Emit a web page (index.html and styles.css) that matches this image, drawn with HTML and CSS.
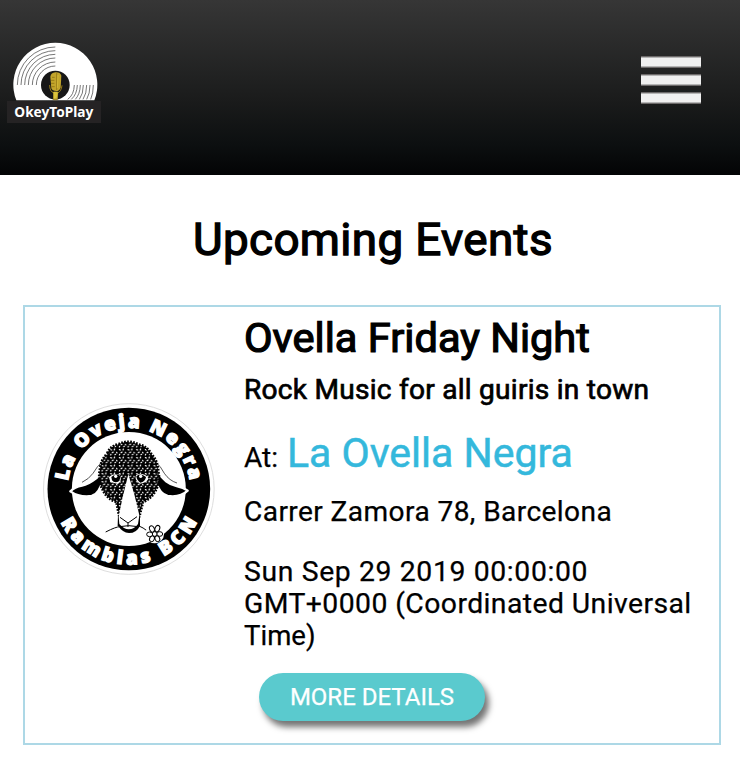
FILE: index.html
```html
<!DOCTYPE html>
<html lang="en">
<head>
<meta charset="utf-8">
<title>OkeyToPlay</title>
<link rel="stylesheet" href="styles.css">
</head>
<body>
<header class="header">
  <svg class="brand" viewBox="0 0 330 285" role="img" aria-label="OkeyToPlay">
    <path d="M49 196A126 126 0 1 1 283 196Z" fill="#fff"/>
    <g fill="none" stroke="#444" stroke-width="2.200">
      <path d="M52 150A114 114 0 0 1 166 36M63 150A103 103 0 0 1 166 47M74 150A92 92 0 0 1 166 58M85 150A81 81 0 0 1 166 69M97 150A69 69 0 0 1 166 81M109 150A57 57 0 0 1 166 93"/>
      <path d="M280 150Q280 176 272 193M270 150Q270 176 260 193M260 150Q260 176 249 193M250 150Q250 177 238 193M241 150Q240 178 226 193M232 150Q231 178 214 193M223 150Q222 180 203 193"/>
    </g>
    <circle cx="166" cy="150" r="43" fill="#171717"/>
    <path d="M151 125Q153 113 166 112Q181 111 184 122L182 158Q178 168 169 168Q157 168 154 160Z" fill="#c2a52b"/>
    <path d="M149 150Q149 170 162 174L160 194H172L173 174Q184 169 186 151M156 127H164M153 136H163M153 145H163M155 155H164M170 114V165" fill="none" stroke="#987c18" stroke-width="3"/>
    <path d="M174 120L172 159M161 171H173L170 191H162Z" fill="#dbc23b" stroke="#dbc23b" stroke-width="2"/>
    <rect x="21" y="198" width="282" height="66" fill="#252324"/>
    <text class="brand-name" x="43" y="245" textLength="237" lengthAdjust="spacingAndGlyphs">OkeyToPlay</text>
  </svg>
  <div class="menu"><span></span><span></span><span></span></div>
</header>
<main>
  <h1 class="heading"><span>Upcoming Events</span></h1>
  <article class="card">
    <svg class="venue-logo" viewBox="0 0 540 540" role="img" aria-label="La Oveja Negra Ramblas BCN">
      <defs>
        <path id="top-arc" d="M82.500 267A184 184 0 0 1 450.500 267"/>
        <path id="bottom-arc" d="M39.500 267A227 227 0 0 0 493.500 267"/>
        <pattern id="wool" width="26" height="24" patternUnits="userSpaceOnUse">
          <rect width="26" height="24" fill="#000"/>
          <path d="M4 5l3 1M16 3l-1 3M22 13l1 2M9 14l3-2M4 21l1-2M17 20l2-1" stroke="#fff" stroke-width="3.500" stroke-linecap="round"/>
        </pattern>
      </defs>
      <circle cx="266.500" cy="267" r="256" fill="#fff" stroke="#dedede" stroke-width="3"/>
      <circle cx="266.500" cy="267" r="244"/>
      <circle cx="266.500" cy="267" r="171" fill="#fff"/>
      <g class="ring-text">
        <text><textPath href="#top-arc" startOffset="24" textLength="528" lengthAdjust="spacing">La Oveja Negra</textPath></text>
        <text><textPath href="#bottom-arc" startOffset="103" textLength="508" lengthAdjust="spacing">Ramblas BCN</textPath></text>
      </g>
      <g stroke="#fff" stroke-width="7" stroke-linejoin="round">
        <path d="M183 224C163 238 151 252 126 257Q104 261 91 274Q118 293 155 288Q178 282 188 239Z"/>
        <path d="M352 215C370 239 385 253 410 258Q430 262 443 272Q420 294 383 288Q359 282 349 248Z"/>
      </g>
      <path d="M188 184Q171 199 159 220Q147 237 126 247M344 184Q362 197 373 220Q388 242 411 249" fill="none" stroke="#000" stroke-width="2"/>
      <path d="M202 160Q211 137 237 132Q266 118 294 133Q322 138 334 162Q354 183 355 216Q362 246 346 273Q334 296 309 306L298 350L270 376L238 350L229 306Q199 296 187 267Q173 244 180 207Q182 180 202 160Z" fill="url(#wool)" stroke="#000" stroke-width="8" stroke-dasharray="5 4"/>
      <path d="M207 232Q217 219 239 224Q248 239 234 252L211 246Z M288 225Q312 216 326 235Q321 249 300 251Q283 241 288 225Z" fill="#fff"/>
      <path d="M214 231Q228 217 242 228L238 243Q224 251 216 241Z M289 228Q303 217 318 231Q316 245 301 248Q290 241 289 228Z"/>
      <circle cx="227" cy="229" r="5" fill="#fff"/><circle cx="302" cy="229" r="5" fill="#fff"/>
      <path d="M234 345L233 376Q248 399 267 399Q290 399 300 377V337Z"/>
      <path d="M265 223L248 291L236 350L238 372Q252 388 266 388Q283 388 294 372L298 346L284 287Z" fill="#fff"/>
      <path d="M240 352L264 369L291 350M264 369V381M239 380Q265 374 295 380M240 380Q228 380 197 396M295 377Q310 383 322 393" fill="none" stroke="#000" stroke-width="3"/>
      <circle cx="344" cy="402" r="28" fill="#fff"/>
      <g fill="#fff" stroke="#000" stroke-width="3">
        <ellipse cx="336" cy="387" rx="7" ry="10" transform="rotate(-25 336 387)"/>
        <ellipse cx="352" cy="386" rx="7" ry="10" transform="rotate(22 352 386)"/>
        <ellipse cx="359" cy="402" rx="9" ry="7"/>
        <ellipse cx="352" cy="416" rx="7" ry="9" transform="rotate(-25 352 416)"/>
        <ellipse cx="336" cy="416" rx="7" ry="9" transform="rotate(25 336 416)"/>
        <ellipse cx="329" cy="403" rx="9" ry="7"/>
        <circle cx="344" cy="402" r="7"/>
      </g>
    </svg>
    <div class="details">
      <h2 class="title"><span>Ovella Friday Night</span></h2>
      <p class="tagline"><span>Rock Music for all guiris in town</span></p>
      <p class="place"><span class="at">At:</span><a class="venue">La Ovella Negra</a></p>
      <p class="address"><span>Carrer Zamora 78, Barcelona</span></p>
      <p class="date"><span class="day">Sun Sep 29 2019 00:00:00</span><br><span class="zone">GMT+0000 (Coordinated Universal</span><br><span class="zone-end">Time)</span></p>
      <a class="button">MORE DETAILS</a>
    </div>
  </article>
</main>
</body>
</html>
```
FILE: styles.css
```css
* { box-sizing: border-box; }
body { margin: 0; background: #fff; color: #000; font-family: Roboto, sans-serif; }
h1, h2, p { margin: 0; font-weight: 400; white-space: nowrap; }
h1 span, h2 span, p span, .venue {
  display: inline-block;
  vertical-align: top;
  transform: scaleX(1.04);
  transform-origin: left;
}

.header {
  height: 175px;
  padding: 35px 39px 0 0;
  display: flex;
  justify-content: space-between;
  align-items: flex-start;
  background: linear-gradient(#363636, #1a1b1b 58%, #0c0f10 83%, #030405);
}
.brand { width: 110px; height: 95px; display: block; }
.brand-name { font: 700 45px "Noto Sans", sans-serif; fill: #fff; }
.menu { display: flex; flex-direction: column; gap: 6px; padding-top: 21px; }
.menu span {
  width: 60px;
  height: 12px;
  background: linear-gradient(#6c6969 1px, #b5b5b5 1px 2px, #f0f0f0 2px 10px, #b5b5b5 10px 11px, #6c6969 11px);
}

.heading {
  height: 130px;
  line-height: 130px;
  padding-left: 192.5px;
  font-size: 44px;
  letter-spacing: .35px;
  -webkit-text-stroke: 1.3px #000;
}
.card {
  width: 698px;
  height: 440px;
  margin: 0 0 0 23px;
  padding-left: 15px;
  border: 2px solid #add8e6;
  display: flex;
}
.venue-logo { width: 180px; height: 180px; margin-top: 93px; flex: none; }
.ring-text { font: 800 56px "Open Sans", sans-serif; fill: #fff; stroke: #fff; stroke-width: 4px; }
.details { padding: 8px 0 0 23.5px; font-size: 27px; line-height: 32px; -webkit-text-stroke: .25px; }
.title { font-size: 40px; line-height: 48px; -webkit-text-stroke: 1.2px #000; }
.tagline { margin-top: 11px; letter-spacing: .24px; -webkit-text-stroke: .7px #000; }
.place { height: 48px; margin-top: 24px; display: flex; align-items: baseline; line-height: 48px; }
.place .at { width: 43px; }
.place .venue { font-size: 40px; color: #34b8dc; transform: scaleX(1.025); -webkit-text-stroke: .5px; }
.address { margin-top: 18px; letter-spacing: .4px; }
.date { margin-top: 28px; }
.date .day { letter-spacing: .6px; transform: scaleX(1.05); }
.date .zone { letter-spacing: .4px; transform: scaleX(1.05); }
.date .zone-end { transform: scaleX(1.02); }
.button {
  display: flex;
  align-items: center;
  justify-content: center;
  width: 226px;
  height: 48px;
  margin: 21px 0 0 15.5px;
  border-radius: 24px;
  background: #5acace;
  color: #fff;
  font-size: 24px;
  box-shadow: 4px 6px 6px rgba(0, 0, 0, .55);
}
```
